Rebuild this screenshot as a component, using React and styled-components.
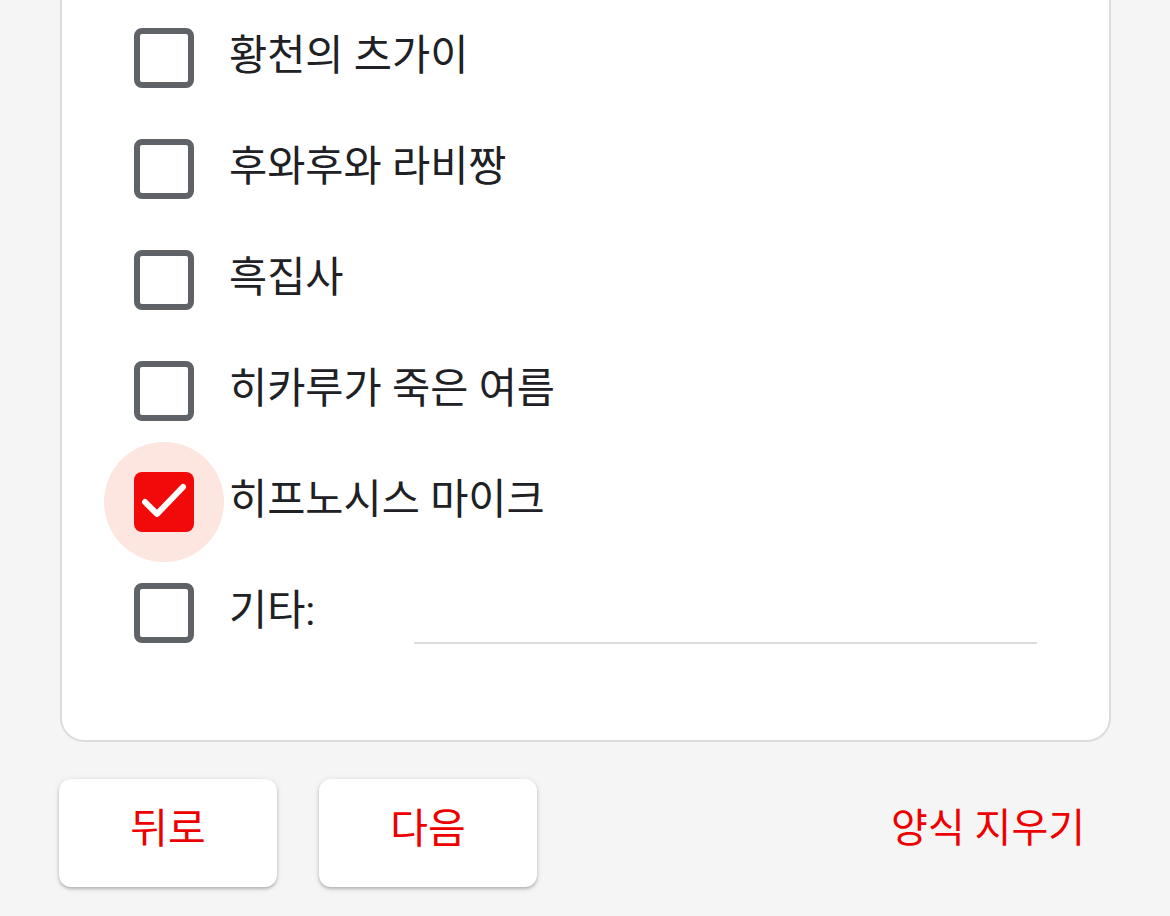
import React, { useState } from 'react'
import styled, { createGlobalStyle } from 'styled-components'

const options = [
  '황천의 츠가이',
  '후와후와 라비짱',
  '흑집사',
  '히카루가 죽은 여름',
  '히프노시스 마이크',
]

const GlobalStyle = createGlobalStyle`
  html, body {
    margin: 0;
    padding: 0;
    background: #f5f5f6;
  }
  body {
    font-family: Roboto, 'Noto Sans CJK KR', sans-serif;
    color: #202124;
  }
`

const Page = styled.div`
  width: 1170px;
  height: 916px;
  overflow: hidden;
  padding: 0 59px 0 60px;
  box-sizing: border-box;
`

const Card = styled.section`
  background: #fff;
  border: 2px solid #dadce0;
  border-top: none;
  border-radius: 0 0 24px 24px;
  padding: 2px 0 72px 72px;
  display: flex;
  flex-direction: column;
`

const Row = styled.label`
  height: 111px;
  display: flex;
  align-items: center;
  gap: 35px;
  cursor: pointer;
`

const BoxWrap = styled.span`
  position: relative;
  width: 120px;
  height: 120px;
  margin: 0 -30px;
  display: grid;
  place-items: center;
  border-radius: 50%;
  background: ${(p) => (p.$active ? '#fde5e0' : 'transparent')};
  flex-shrink: 0;
`

const Box = styled.span`
  width: 60px;
  height: 60px;
  box-sizing: border-box;
  border-radius: 8px;
  border: ${(p) => (p.$checked ? 'none' : '6px solid #5f6368')};
  background: ${(p) => (p.$checked ? '#f20a0a' : '#fff')};
  display: grid;
  place-items: center;
`

const Label = styled.span`
  font-size: 41.5px;
  line-height: 1;
  color: #202124;
  margin-top: -4px;
`

const OtherInput = styled.span`
  flex: 1;
  align-self: flex-end;
  margin: 0 72px 24px 64px;
  border-bottom: 2px solid #dadce0;
  height: 2px;
`

const Footer = styled.div`
  display: flex;
  align-items: center;
  gap: 42px;
  margin-top: 37px;
  margin-left: -1px;
`

const Button = styled.button`
  width: 218px;
  height: 108px;
  padding: 0 0 8px;
  border: none;
  border-radius: 12px;
  background: #fff;
  box-shadow: 0 2px 3px rgba(60, 64, 67, 0.3), 0 1px 6px rgba(60, 64, 67, 0.12);
  color: #ee0000;
  font-family: Roboto, 'Noto Sans CJK KR', sans-serif;
  font-size: 41px;
  line-height: 1;
  font-weight: 400;
  cursor: pointer;
`

const TextButton = styled.button`
  margin-left: auto;
  padding: 0 26px 8px;
  height: 108px;
  border: none;
  background: transparent;
  color: #ee0000;
  font-family: Roboto, 'Noto Sans CJK KR', sans-serif;
  font-size: 40px;
  line-height: 1;
  font-weight: 400;
  cursor: pointer;
`

function Check() {
  return (
    <svg width="60" height="60" viewBox="0 0 60 60">
      <path
        d="M11 30 L23 42 L49 15"
        fill="none"
        stroke="#fff"
        strokeWidth="6"
        strokeLinecap="round"
        strokeLinejoin="round"
      />
    </svg>
  )
}

export default function App() {
  const [checked, setChecked] = useState([false, false, false, false, true, false])

  const toggle = (i) => {
    const next = [...checked]
    next[i] = !next[i]
    setChecked(next)
  }

  return (
    <Page>
      <GlobalStyle />
      <Card>
        {options.map((name, i) => (
          <Row key={name} onClick={() => toggle(i)}>
            <BoxWrap $active={i === 4}>
              <Box $checked={checked[i]}>{checked[i] && <Check />}</Box>
            </BoxWrap>
            <Label>{name}</Label>
          </Row>
        ))}
        <Row onClick={() => toggle(5)}>
          <BoxWrap>
            <Box $checked={checked[5]}>{checked[5] && <Check />}</Box>
          </BoxWrap>
          <Label>기타:</Label>
          <OtherInput />
        </Row>
      </Card>
      <Footer>
        <Button>뒤로</Button>
        <Button>다음</Button>
        <TextButton>양식 지우기</TextButton>
      </Footer>
    </Page>
  )
}
